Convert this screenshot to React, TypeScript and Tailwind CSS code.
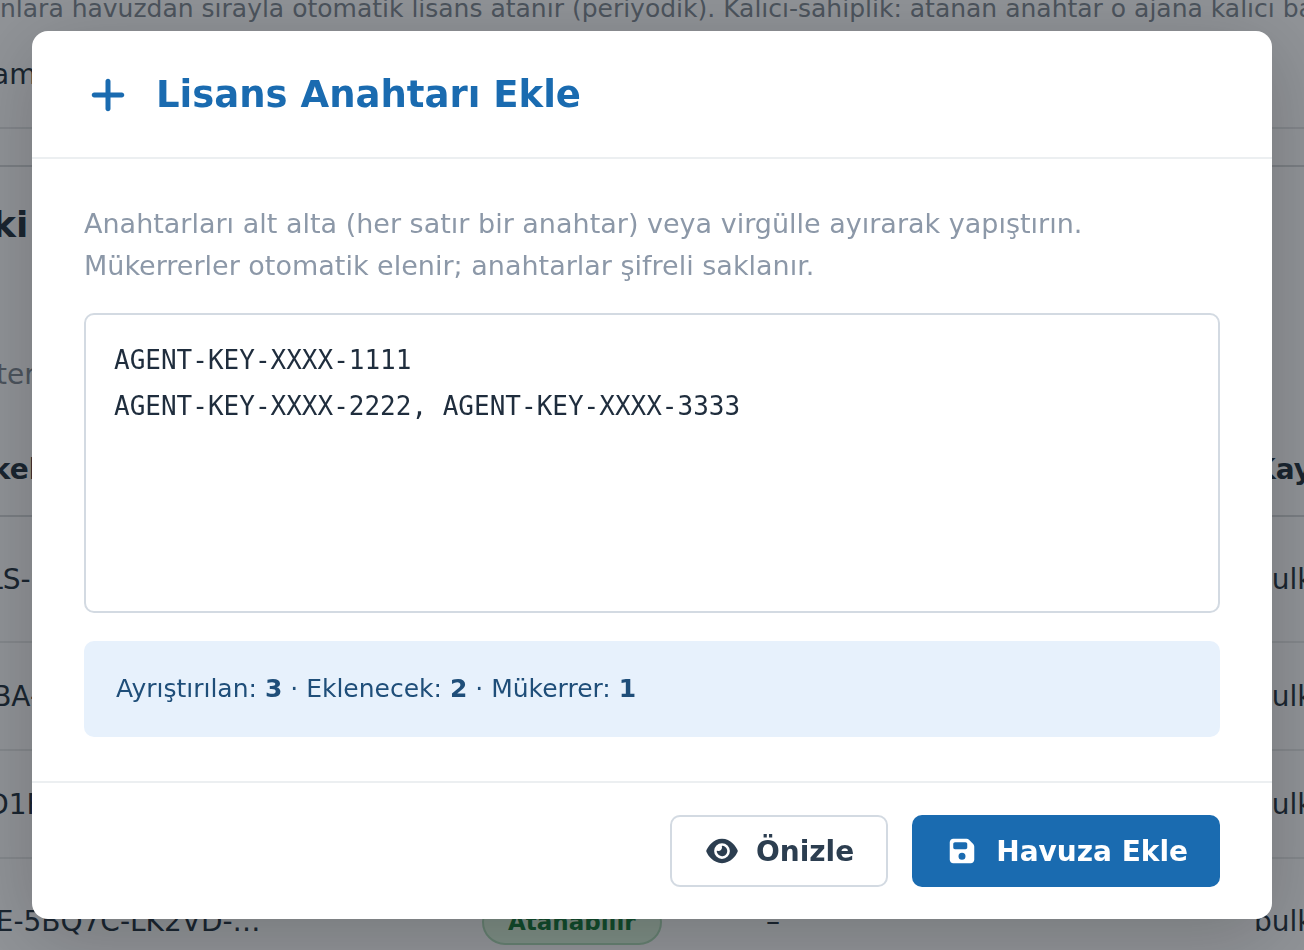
import React, { useState } from 'react';
import { FaEye, FaFloppyDisk, FaPlus } from 'react-icons/fa6';

const initialKeys = 'AGENT-KEY-XXXX-1111\nAGENT-KEY-XXXX-2222, AGENT-KEY-XXXX-3333';

const rows = [
  { id: 'ALS-9KD2M-X4TQA-…', height: 'h-[126px]' },
  { id: 'MBA-7RW3P-N8VHC-…', height: 'h-[108px]' },
  { id: 'AD1F-2MZ6J-Q5YLE-…', height: 'h-[108px]' },
  { id: 'WE-5BQ7C-LK2VD-…', height: 'h-[126px]' },
];

// License page that stays visible behind the modal
function LicensePage() {
  return (
    <main className="h-screen overflow-hidden bg-[#f0f5fc] text-[28px] text-[#2c3e50]" aria-hidden="true">
      <section className="h-[129px] overflow-hidden border-b-2 border-[#d8dee6] whitespace-nowrap">
        <p className="-mt-2 text-[25px] leading-[34px] text-[#7f8c9b]">
          nlara havuzdan sırayla otomatik lisans atanır (periyodik). Kalıcı-sahiplik: atanan anahtar o ajana kalıcı bağlanır.
        </p>
        <p className="-ml-2 mt-8 leading-[34px]">am</p>
      </section>
      <div className="h-[38px] border-b-2 border-[#cbd2da]" />
      <h2 className="-ml-2 mt-9 text-[36px] leading-[44px] font-bold">ki</h2>
      <p className="-ml-1 mt-28 leading-8 text-[#7f8c9b]">ter</p>
      <table className="-ml-8 mt-[31px] w-[1600px] table-fixed border-collapse text-left whitespace-nowrap">
        <colgroup>
          <col className="w-[514px]" />
          <col className="w-[284px]" />
          <col className="w-[488px]" />
          <col />
        </colgroup>
        <thead>
          <tr className="h-[94px] border-b-2 border-[#cbd2da] font-bold">
            <th className="pt-0.5">Okel</th>
            <th className="pt-0.5">Durum</th>
            <th className="pt-0.5">Ajan</th>
            <th className="pt-0.5">Kaynak</th>
          </tr>
        </thead>
        <tbody>
          {rows.map((row) => (
            <tr key={row.id} className={`border-b-2 border-[#dbe1e8] ${row.height}`}>
              <td className="pt-0.5">{row.id}</td>
              <td className="pt-0.5">
                <span className="inline-block rounded-full border-2 border-[#a9d5bc] bg-[#d0ebdc] px-6 text-[23px] leading-[42px] font-bold text-[#1e7e4a]">
                  Atanabilir
                </span>
              </td>
              <td className="pt-0.5">–</td>
              <td className="pt-0.5">bulk</td>
            </tr>
          ))}
        </tbody>
      </table>
    </main>
  );
}

function AddKeysModal() {
  const [keys, setKeys] = useState(initialKeys);

  return (
    <div className="fixed inset-0 flex items-center justify-center bg-black/40 px-8">
      <div
        role="dialog"
        aria-modal="true"
        aria-labelledby="modal-title"
        className="w-full max-w-[1240px] rounded-[16px] bg-white shadow-[0_16px_80px_rgba(0,0,0,0.2)]"
      >
        <header className="flex items-center gap-7 border-b-2 border-[#eceff1] px-[52px] pt-[41px] pb-[39px] text-[#1a6bb0]">
          <div className="flex h-[46px] items-center pl-1">
            <FaPlus className="size-10" />
          </div>
          <h1 id="modal-title" className="text-[37px] leading-[46px] font-bold">
            Lisans Anahtarı Ekle
          </h1>
        </header>

        <div className="px-[52px] py-11">
          <label htmlFor="keys" className="block text-[27px] leading-[42px] text-[#8c98a8]">
            Anahtarları alt alta (her satır bir anahtar) veya virgülle ayırarak yapıştırın.
            <br />
            Mükerrerler otomatik elenir; anahtarlar şifreli saklanır.
          </label>
          <textarea
            id="keys"
            value={keys}
            onChange={(e) => setKeys(e.target.value)}
            spellCheck={false}
            className="mt-[26px] block h-[300px] w-full resize-none rounded-[10px] border-2 border-[#d3dae2] px-7 py-[22px] font-['DejaVu_Sans_Mono',monospace] text-[26px] leading-[46px] text-[#1f2d3d] outline-none"
          />
          <p className="mt-7 rounded-[10px] bg-[#e7f1fc] px-8 py-6 text-[25px] leading-[48px] text-[#1f4e79]">
            Ayrıştırılan: <strong>3</strong> · Eklenecek: <strong>2</strong> · Mükerrer: <strong>1</strong>
          </p>
        </div>

        <footer className="flex justify-end gap-6 border-t-2 border-[#eceff1] px-[52px] py-8 text-[28px] font-bold">
          <button type="button" className="flex h-[72px] items-center gap-4 rounded-[10px] border-2 border-[#d3dae2] px-8 text-[#2c3e50]">
            <FaEye className="h-8 w-9 py-0.5" />
            <span className="pt-0.5">Önizle</span>
          </button>
          <button type="button" className="flex h-[72px] items-center gap-4 rounded-[10px] bg-[#1a6bb0] px-8 text-white">
            <FaFloppyDisk className="h-7 w-9" />
            <span className="pt-0.5">Havuza Ekle</span>
          </button>
        </footer>
      </div>
    </div>
  );
}

function App() {
  return (
    <div className="font-['DejaVu_Sans',sans-serif]">
      <LicensePage />
      <AddKeysModal />
    </div>
  );
}

export default App;
